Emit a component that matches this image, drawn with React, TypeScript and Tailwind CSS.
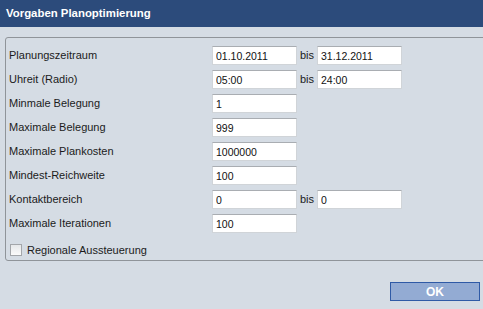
import React from "react";

interface Row {
	label: string;
	from: string;
	to?: string;
}

const rows: Row[] = [
	{ label: "Planungszeitraum", from: "01.10.2011", to: "31.12.2011" },
	{ label: "Uhreit (Radio)", from: "05:00", to: "24:00" },
	{ label: "Minmale Belegung", from: "1" },
	{ label: "Maximale Belegung", from: "999" },
	{ label: "Maximale Plankosten", from: "1000000" },
	{ label: "Mindest-Reichweite", from: "100" },
	{ label: "Kontaktbereich", from: "0", to: "0" },
	{ label: "Maximale Iterationen", from: "100" },
];

const Field: React.FC<{ value: string }> = ({ value }) => (
	<input
		readOnly
		value={value}
		className="w-[85px] h-[19px] bg-white border border-[#d0d4d8] border-t-[#a9adb2] px-[3px] text-[10.5px] text-[#111] outline-none"
	/>
);

export default function App() {
	return (
		<div
			className="w-[483px] h-[309px] bg-[#d5dce4] overflow-hidden flex flex-col text-[#1b1b1b]"
			style={{ fontFamily: '"Liberation Sans", Arial, sans-serif' }}>
			{/* Title bar */}
			<div className="h-[27px] shrink-0 bg-[#2c4b7b] flex items-center pl-[6px] text-white font-bold text-[11.4px]">
				Vorgaben Planoptimierung
			</div>

			{/* Form */}
			<div className="pt-[10px] pl-[5px]">
				<div className="w-[500px] h-[224px] border border-[#8f9499] rounded-[3px] pl-[3px] pt-[8px] flex flex-col">
					<div className="flex flex-col gap-[5px]">
						{rows.map((row) => (
							<div key={row.label} className="flex items-center h-[19px]">
								<span className="w-[203px] text-[11px]">{row.label}</span>
								<Field value={row.from} />
								{row.to && (
									<>
										<span className="w-[20px] pl-[3px] text-[11px]">bis</span>
										<Field value={row.to} />
									</>
								)}
							</div>
						))}
					</div>
					<label className="flex items-center mt-[9px] pl-[1px] gap-[5px] text-[11px]">
						<span className="w-[12px] h-[12px] border border-[#a3a6aa] bg-gradient-to-b from-[#e6e8ea] to-[#fbfbfb]" />
						Regionale Aussteuerung
					</label>
				</div>
			</div>

			{/* Footer */}
			<div className="flex justify-end pr-[3px] mt-[21px]">
				<button className="w-[90px] h-[19px] bg-[#93abd3] border border-[#2f5aa6] text-white font-bold text-[12px] flex items-center justify-center">
					OK
				</button>
			</div>
		</div>
	);
}
